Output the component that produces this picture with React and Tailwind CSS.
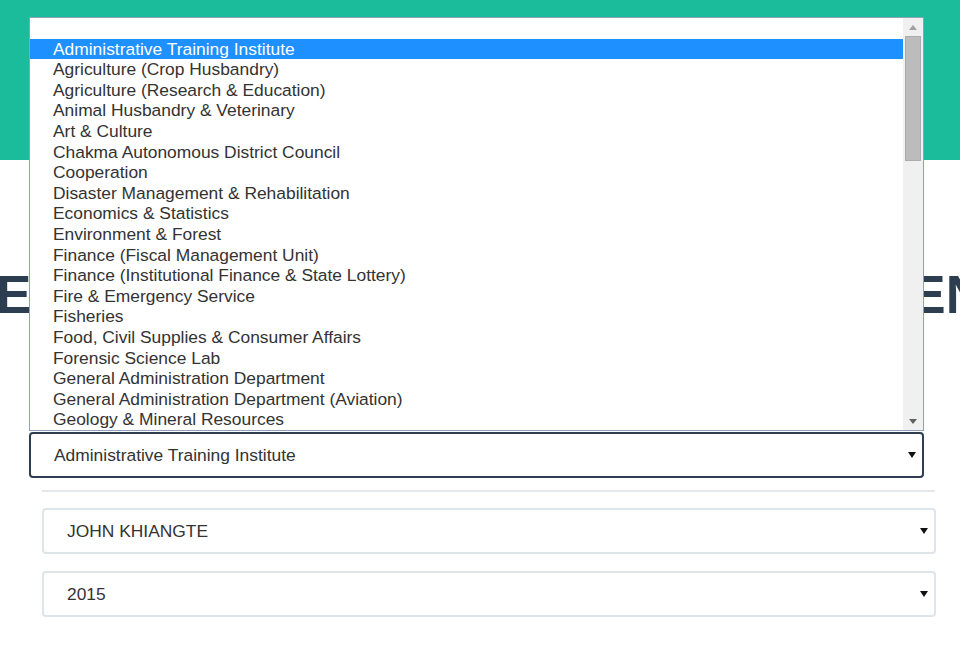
import React from 'react';

const departments = [
  'Administrative Training Institute',
  'Agriculture (Crop Husbandry)',
  'Agriculture (Research & Education)',
  'Animal Husbandry & Veterinary',
  'Art & Culture',
  'Chakma Autonomous District Council',
  'Cooperation',
  'Disaster Management & Rehabilitation',
  'Economics & Statistics',
  'Environment & Forest',
  'Finance (Fiscal Management Unit)',
  'Finance (Institutional Finance & State Lottery)',
  'Fire & Emergency Service',
  'Fisheries',
  'Food, Civil Supplies & Consumer Affairs',
  'Forensic Science Lab',
  'General Administration Department',
  'General Administration Department (Aviation)',
  'Geology & Mineral Resources',
];

// --- small down arrow used by the selects ---
const Caret = () => (
  <svg width="8" height="6" viewBox="0 0 8 6">
    <polygon points="0,0 8,0 4,6" fill="#111" />
  </svg>
);

const SelectBox = ({ value, focused, className = '' }) => (
  <div
    className={`flex items-center justify-between h-[46px] rounded-[4px] border-2 bg-white pl-[23px] pr-[6px] ${
      focused ? 'border-[#2c3e50]' : 'border-[#dde4ea]'
    } ${className}`}
  >
    <span className="text-[17.4px] text-[#333]">{value}</span>
    <Caret />
  </div>
);

// --- open listbox popup over the page ---
const ListPopup = () => (
  <div className="absolute left-[29px] top-[17px] w-[895px] h-[414px] border border-[#8da2b8] bg-white flex">
    <div className="flex-1 overflow-hidden">
      <div className="h-[20.6px]" />
      {departments.map((d, i) => (
        <div
          key={d}
          className={`h-[20.6px] leading-[20.6px] pl-[23px] text-[17.4px] whitespace-nowrap ${
            i === 0 ? 'bg-[#1e90ff] text-white' : 'text-[#333]'
          }`}
        >
          {d}
        </div>
      ))}
    </div>
    <div className="w-[20px] bg-[#f0f0f0] flex flex-col items-center">
      <div className="h-[18px] flex items-center justify-center">
        <svg width="8" height="5" viewBox="0 0 8 5">
          <polygon points="0,5 8,5 4,0" fill="#a0a0a0" />
        </svg>
      </div>
      <div className="w-[16px] h-[125px] bg-[#bcbcbc] border border-[#acacac]" />
      <div className="flex-1" />
      <div className="h-[18px] flex items-center justify-center">
        <svg width="8" height="5" viewBox="0 0 8 5">
          <polygon points="0,0 8,0 4,5" fill="#606060" />
        </svg>
      </div>
    </div>
  </div>
);

export default function App() {
  return (
    <div
      className="relative w-[960px] h-[650px] overflow-hidden bg-white"
      style={{ fontFamily: '"Liberation Sans", Arial, sans-serif' }}
    >
      <header className="h-[160px] bg-[#1abc9c]" />

      <div className="mt-[108px] flex justify-between overflow-hidden text-[53px] font-bold leading-none text-[#2c3e50] whitespace-nowrap">
        <span className="ml-[-4px]">E</span>
        <span className="mr-[-24px]">EN</span>
      </div>

      <div className="mt-[111px]">
        <SelectBox value="Administrative Training Institute" focused className="ml-[29px] w-[895px]" />
        <div className="ml-[42px] w-[893px] h-[2px] bg-[#e3e8ec] mt-[12px]" />
        <SelectBox value="JOHN KHIANGTE" className="ml-[42px] w-[894px] mt-[16px]" />
        <SelectBox value="2015" className="ml-[42px] w-[894px] mt-[17px]" />
      </div>

      <ListPopup />
    </div>
  );
}
